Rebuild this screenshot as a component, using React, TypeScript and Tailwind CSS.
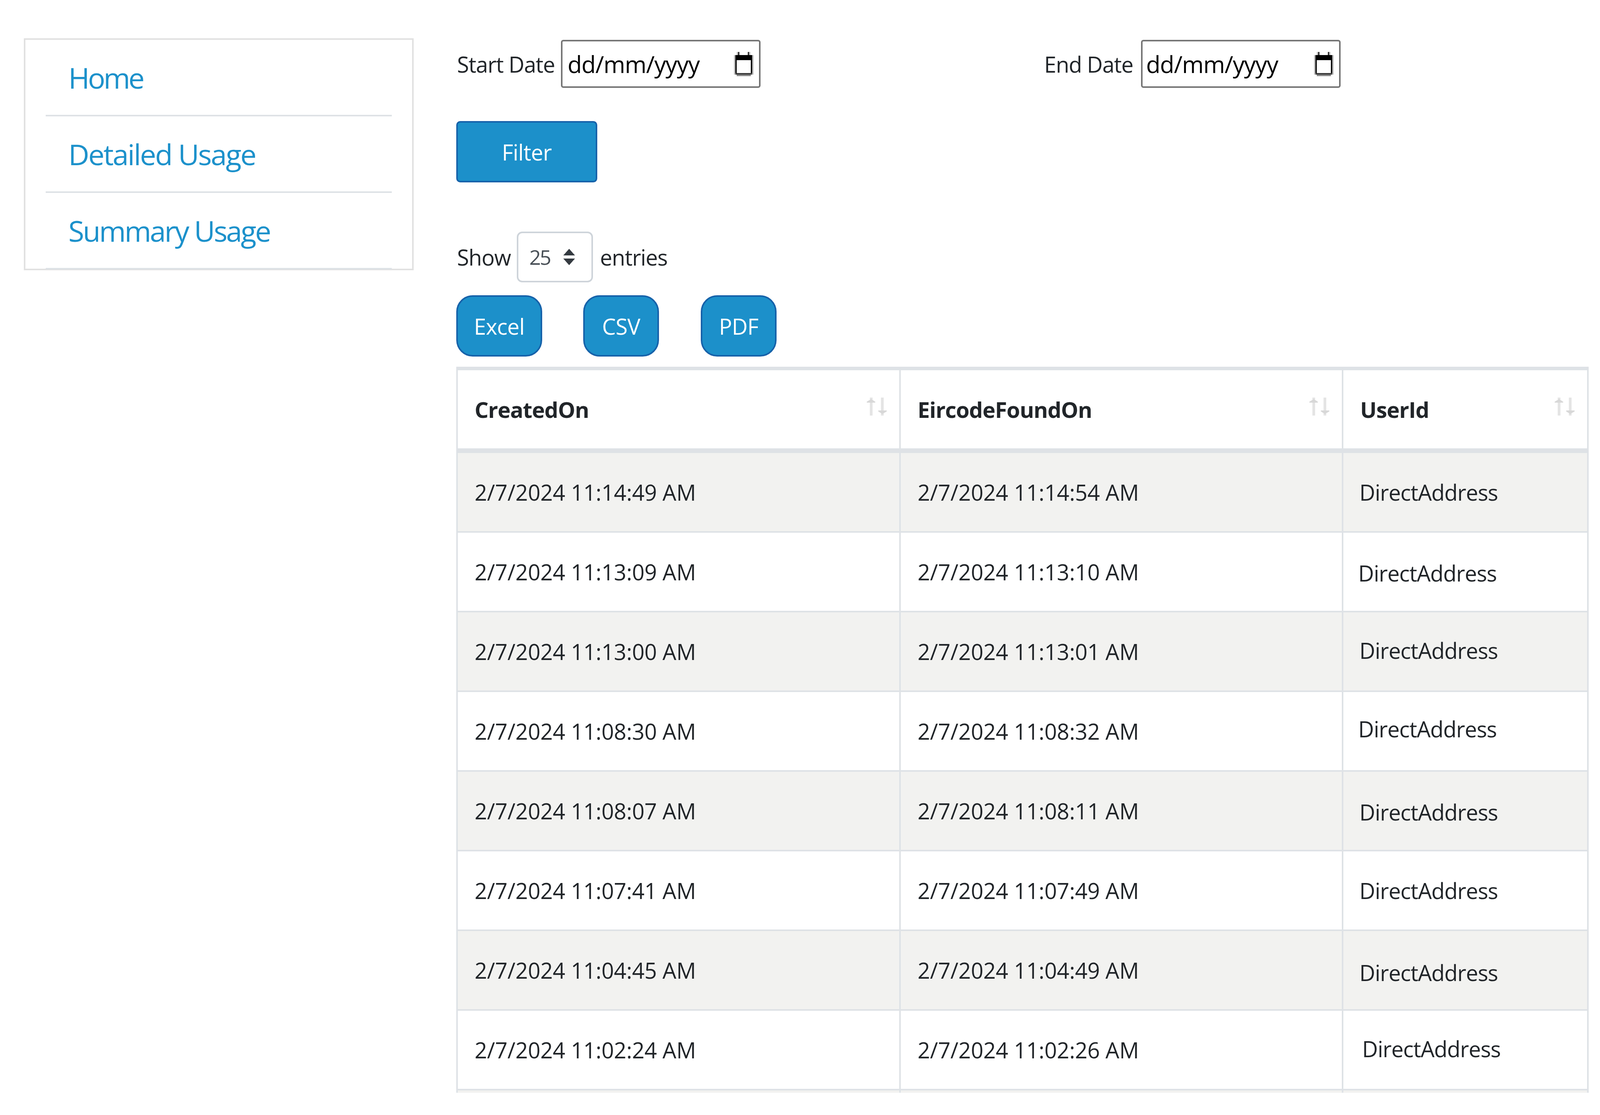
import React from "react";

const rows: { a: string; b: string; o: string }[] = [
  { a: "2/7/2024 11:14:49 AM", b: "2/7/2024 11:14:54 AM", o: "" },
  { a: "2/7/2024 11:13:09 AM", b: "2/7/2024 11:13:10 AM", o: "-translate-x-[3px] translate-y-[3px]" },
  { a: "2/7/2024 11:13:00 AM", b: "2/7/2024 11:13:01 AM", o: "-translate-y-[3px]" },
  { a: "2/7/2024 11:08:30 AM", b: "2/7/2024 11:08:32 AM", o: "-translate-x-[3px] -translate-y-[6px]" },
  { a: "2/7/2024 11:08:07 AM", b: "2/7/2024 11:08:11 AM", o: "translate-y-[3px]" },
  { a: "2/7/2024 11:07:41 AM", b: "2/7/2024 11:07:49 AM", o: "" },
  { a: "2/7/2024 11:04:45 AM", b: "2/7/2024 11:04:49 AM", o: "translate-y-[6px]" },
  { a: "2/7/2024 11:02:24 AM", b: "2/7/2024 11:02:26 AM", o: "translate-x-[7px] -translate-y-[3px]" },
];

const links: { t: string; c: string }[] = [
  { t: "Home", c: "tracking-[-4.6px]" },
  { t: "Detailed Usage", c: "tracking-[-2.8px]" },
  { t: "Summary Usage", c: "tracking-[-3.6px]" },
];

function CalendarIcon() {
  return (
    <svg width="50" height="62" viewBox="0 0 58 62" preserveAspectRatio="none" className="shrink-0">
      <rect x="0" y="8" width="4" height="50" fill="#bdbdbd" />
      <rect x="54" y="8" width="4" height="50" fill="#bdbdbd" />
      <rect x="8" y="0" width="4" height="9" fill="#c8c8c8" />
      <rect x="12" y="0" width="4" height="9" fill="#222" />
      <rect x="41" y="0" width="4" height="9" fill="#222" />
      <rect x="45" y="0" width="4" height="9" fill="#c8c8c8" />
      <rect x="4" y="8" width="50" height="13" fill="#000" />
      <rect x="4" y="21" width="4" height="33" fill="#000" />
      <rect x="50" y="21" width="4" height="33" fill="#000" />
      <rect x="4" y="54" width="50" height="4" fill="#3c3c3c" />
      <rect x="8" y="58" width="42" height="4" fill="#8a8a8a" />
    </svg>
  );
}

function DateInput({ pad }: { pad: string }) {
  return (
    <div className={`flex h-[123px] w-[511px] items-center justify-between rounded-[6px] border-[4px] border-[#767676] ${pad} pr-[14px] text-[60px] text-black`}>
      <span className="tracking-[-1.1px]">dd/mm/yyyy</span>
      <CalendarIcon />
    </div>
  );
}

function SortIcon() {
  return (
    <svg width="51" height="46" viewBox="0 0 59 46" preserveAspectRatio="none" className="mt-[70px] shrink-0">
      <rect x="9" y="0" width="8" height="46" fill="#e4e4e4" />
      <path d="M0 10.5 L13 4 L25 10.5 L25 13 L0 13 Z" fill="#d8d8d8" />
      <rect x="42" y="0" width="8" height="46" fill="#e4e4e4" />
      <path d="M34 33 L59 33 L59 35.5 L46 42 L34 35.5 Z" fill="#d8d8d8" />
    </svg>
  );
}

function Pill({ label, w }: { label: string; w: string }) {
  return (
    <button className={`h-[157px] ${w} rounded-[42px] border-[4px] border-[#1662aa] bg-[#1c90ca] text-[56px] tracking-[-0.7px] text-white`}>
      {label}
    </button>
  );
}

function HeadCell({ label }: { label: string }) {
  return (
    <th className="h-[221px] border-b-[12px] border-l-[4px] border-t-[9px] border-[#dee2e6] p-0 text-left align-top">
      <div className="flex h-[200px] items-start justify-between pl-[43px] pr-[32px]">
        <span className="self-center text-[56px] font-bold tracking-[-1.1px] text-[#212529]">{label}</span>
        <SortIcon />
      </div>
    </th>
  );
}

export default function App() {
  return (
    <div
      className="flex h-[2855px] w-[4096px] items-start overflow-hidden bg-white pl-[61px] pt-[98px] text-[#212529]"
      style={{ fontFamily: '"Open Sans", "Noto Sans", sans-serif' }}
    >
      <nav className="h-[594px] w-[998px] shrink-0 border-[4px] border-[#e1e1e1] px-[52px]">
        {links.map((l) => (
          <a key={l.t} className={`flex h-[196px] items-center border-b-[4px] border-[#dee2e6] pl-[58px] text-[74px] text-[#1c91cb] ${l.c}`}>
            {l.t}
          </a>
        ))}
      </nav>

      <main className="ml-[109px] mt-[4px] w-[2899px] shrink-0 text-[56px]">
        <div className="flex items-center">
          <div className="flex w-[1505px] items-center">
            <span className="ml-[2px] w-[266px] tracking-[-1.2px]">Start Date</span>
            <DateInput pad="pl-[13px]" />
          </div>
          <div className="flex items-center">
            <span className="w-[248px] tracking-[-1.2px]">End Date</span>
            <DateInput pad="pl-[9px]" />
          </div>
        </div>

        <button className="mt-[85px] block h-[157px] w-[361px] rounded-[10px] border-[4px] border-[#1662aa] bg-[#1c90ca] text-[56px] tracking-[-0.7px] text-white">
          Filter
        </button>

        <div className="mt-[126px] flex items-center">
          <span className="ml-[2px] w-[153px] tracking-[-1.2px]">Show</span>
          <div className="flex h-[130px] w-[195px] items-center justify-between rounded-[14px] border-[4px] border-[#ced4da] pl-[28px] pr-[42px] text-[52px] tracking-[-3px] text-[#495057]">
            <span>25</span>
            <svg width="30" height="42" viewBox="0 0 34 42" preserveAspectRatio="none" className="shrink-0">
              <path d="M17 0 L34 17 L0 17 Z" fill="#343a40" />
              <path d="M0 25 L34 25 L17 42 Z" fill="#343a40" />
            </svg>
          </div>
          <span className="ml-[18px] tracking-[-1.2px]">entries</span>
        </div>

        <div className="mt-[33px] flex">
          <Pill label="Excel" w="w-[220px]" />
          <div className="ml-[105px]"><Pill label="CSV" w="w-[194px]" /></div>
          <div className="ml-[107px]"><Pill label="PDF" w="w-[194px]" /></div>
        </div>

        <div className="mt-[26px] h-[1859px] overflow-hidden">
          <table className="w-[2899px] table-fixed border-separate border-spacing-0 border-r-[4px] border-[#dee2e6]">
            <colgroup>
              <col className="w-[1134px]" />
              <col className="w-[1133px]" />
              <col />
            </colgroup>
            <thead>
              <tr>
                <HeadCell label="CreatedOn" />
                <HeadCell label="EircodeFoundOn" />
                <HeadCell label="UserId" />
              </tr>
            </thead>
            <tbody>
              {rows.map((r, i) => (
                <tr key={r.a} className={i % 2 === 0 ? "bg-[#f2f2f0]" : "bg-white"}>
                  <td className="h-[204px] border-b-[4px] border-l-[4px] border-[#dee2e6] p-0 pl-[43px] tracking-[-0.15px]">{r.a}</td>
                  <td className="h-[204px] border-b-[4px] border-l-[4px] border-[#dee2e6] p-0 pl-[43px] tracking-[-0.15px]">{r.b}</td>
                  <td className="h-[204px] border-b-[4px] border-l-[4px] border-[#dee2e6] p-0 pl-[41px] tracking-[-1px]">
                    <span className={`inline-block ${r.o}`}>DirectAddress</span>
                  </td>
                </tr>
              ))}
              <tr className="bg-[#f2f2f0]">
                <td className="h-[204px] border-l-[4px] border-[#dee2e6]" />
                <td className="h-[204px] border-l-[4px] border-[#dee2e6]" />
                <td className="h-[204px] border-l-[4px] border-[#dee2e6]" />
              </tr>
            </tbody>
          </table>
        </div>
      </main>
    </div>
  );
}
